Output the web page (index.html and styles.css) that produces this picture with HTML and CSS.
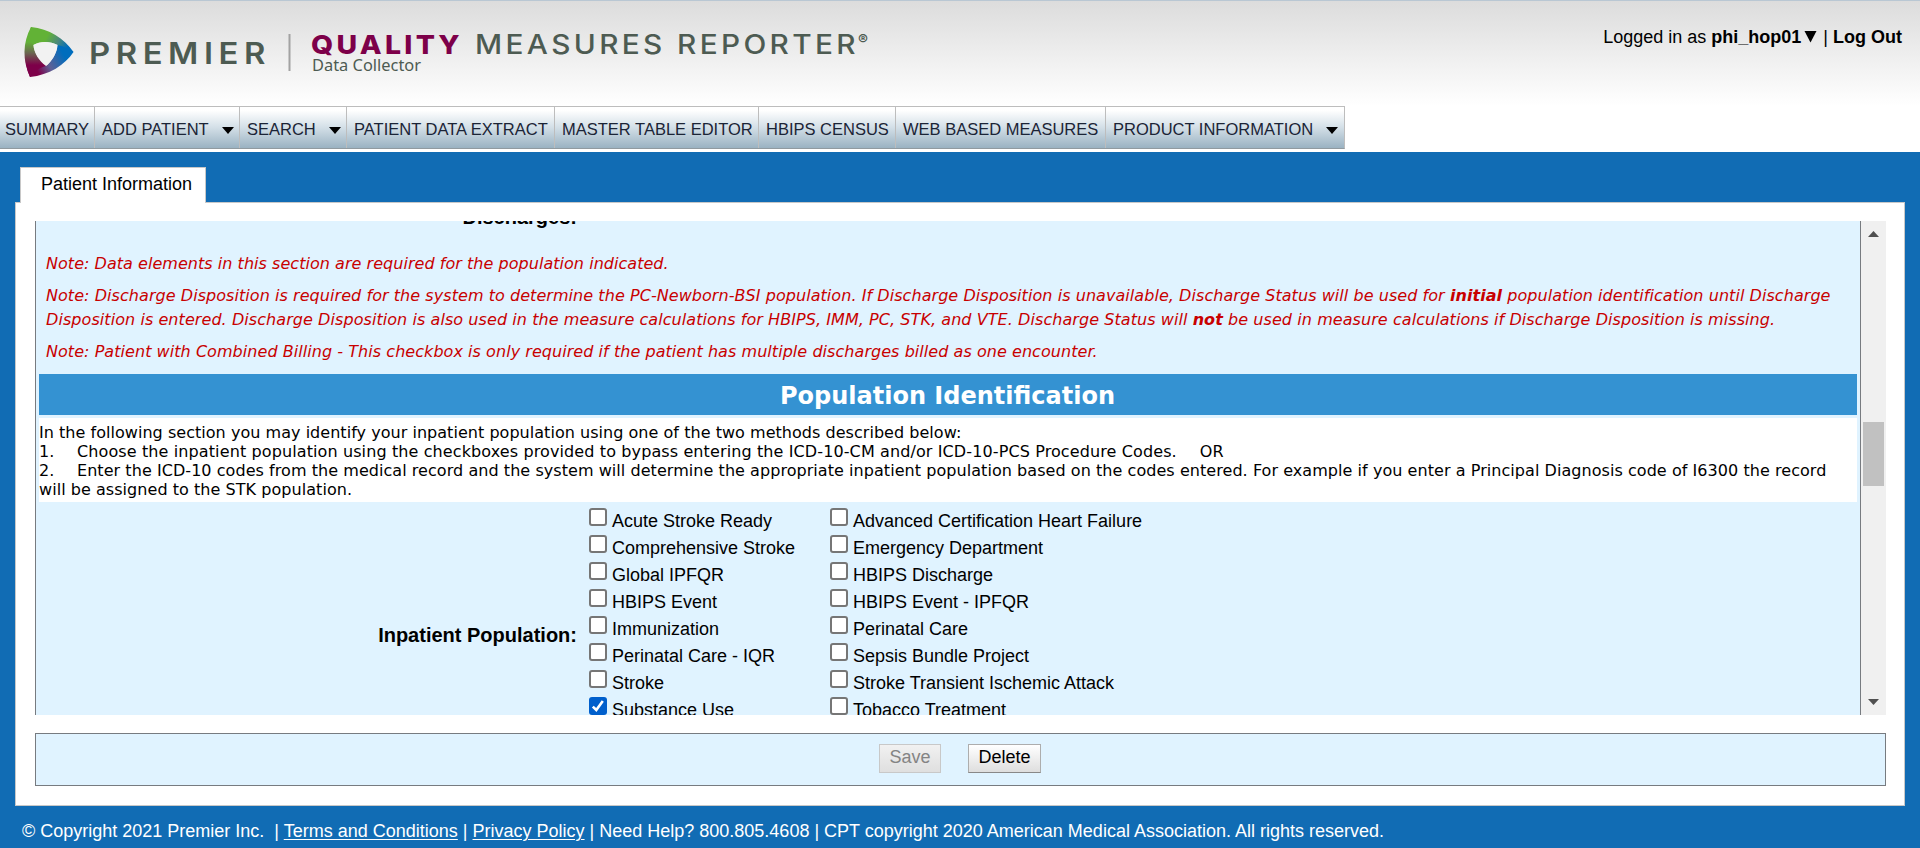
FILE: index.html
```html
<!DOCTYPE html>
<html lang="en">
<head>
<meta charset="utf-8">
<title>Quality Measures Reporter</title>
<link rel="stylesheet" href="styles.css">
</head>
<body>
<header class="header">
  <div class="masthead">
    <svg class="logo" width="880" height="100" viewBox="0 0 880 100" role="img" aria-label="Premier Quality Measures Reporter">
      <defs>
        <linearGradient id="left" x1="0" y1="27" x2="0" y2="77" gradientUnits="userSpaceOnUse"><stop offset=".3" stop-color="#62b236"/><stop offset=".52" stop-color="#6b6650"/><stop offset=".76" stop-color="#7d0049"/></linearGradient>
        <linearGradient id="top" x1="32" y1="30" x2="73" y2="52" gradientUnits="userSpaceOnUse"><stop offset=".35" stop-color="#62b236"/><stop offset=".6" stop-color="#4d8a79"/><stop offset=".85" stop-color="#006dbd"/></linearGradient>
        <linearGradient id="base" x1="32" y1="76" x2="73" y2="52" gradientUnits="userSpaceOnUse"><stop offset=".15" stop-color="#7d0049"/><stop offset=".42" stop-color="#5e6096"/><stop offset=".8" stop-color="#006dbd"/></linearGradient>
      </defs>
      <path d="M31 27C22.500 43 22.500 60 30 77L47 66C39 60 34 53 33.500 45L38 32Z" fill="url(#left)"/>
      <path d="M31 27C49 29 64 38 73.500 52L57 54L57.500 45C50 41 40 41 33.500 45C29 39 29 33 31 27Z" fill="url(#top)"/>
      <path d="M73.500 52C65 65 49 75 30 77L34 60C38 63 42 65 46 66C52 61 57 53 57.500 45C63 46 69 49 73.500 52Z" fill="url(#base)"/>
      <path d="M30 77C27 70 25.500 63 25 56L34 50C36 57 40 62 46 66C39 68 34 72 30 77Z" fill="url(#left)"/>
      <path d="M33.500 45C40 41 50 41 57.500 45C57 53 52 61 46 66C39 61 34 53 33.500 45Z" fill="#f2f2f2"/>
      <text class="logo-name" x="89" y="64" textLength="182" lengthAdjust="spacingAndGlyphs">PREMIER</text>
      <rect x="288.500" y="34" width="2" height="37" fill="#a2a2a2"/>
      <text class="logo-quality" x="311" y="53.500" textLength="152" lengthAdjust="spacingAndGlyphs">QUALITY</text>
      <text class="logo-measures" x="475" y="53.500" textLength="384" lengthAdjust="spacingAndGlyphs">MEASURES REPORTER</text>
      <text class="logo-mark" x="858" y="45">®</text>
      <text class="logo-sub" x="312" y="71" textLength="109" lengthAdjust="spacingAndGlyphs">Data Collector</text>
    </svg>
    <div class="account">Logged in as <b>phi_hop01<svg class="tri" width="13" height="13" viewBox="0 0 13 13"><path d="M.5 1H12.500L6.500 12.500Z"/></svg></b> | <b>Log Out</b></div>
  </div>
  <nav class="nav">
    <a class="nav-summary">SUMMARY</a>
    <a class="nav-add">ADD PATIENT<i class="caret"></i></a>
    <a class="nav-search">SEARCH<i class="caret"></i></a>
    <a class="nav-extract">PATIENT DATA EXTRACT</a>
    <a class="nav-master">MASTER TABLE EDITOR</a>
    <a class="nav-census">HBIPS CENSUS</a>
    <a class="nav-web">WEB BASED MEASURES</a>
    <a class="nav-product">PRODUCT INFORMATION<i class="caret"></i></a>
  </nav>
</header>
<main class="main">
  <div class="tab">Patient Information</div>
  <section class="panel">
    <div class="viewport">
      <div class="content">
        <div class="field-label discharges">Discharges:</div>
        <div class="notes">
          <p class="n1">Note: Data elements in this section are required for the population indicated.</p>
          <p><span class="n2">Note: Discharge Disposition is required for the system to determine the PC-Newborn-BSI population. If Discharge Disposition is unavailable, Discharge Status will be used for <b>initial</b> population identification until Discharge</span><br><span class="n3">Disposition is entered. Discharge Disposition is also used in the measure calculations for HBIPS, IMM, PC, STK, and VTE. Discharge Status will <b>not</b> be used in measure calculations if Discharge Disposition is missing.</span></p>
          <p class="n4">Note: Patient with Combined Billing - This checkbox is only required if the patient has multiple discharges billed as one encounter.</p>
        </div>
        <h2 class="title">Population Identification</h2>
        <div class="intro">
          <div class="i1">In the following section you may identify your inpatient population using one of the two methods described below:</div>
          <div class="i2"><span class="num">1.</span>Choose the inpatient population using the checkboxes provided to bypass entering the ICD-10-CM and/or ICD-10-PCS Procedure Codes.<span class="or">OR</span></div>
          <div class="i3"><span class="num">2.</span>Enter the ICD-10 codes from the medical record and the system will determine the appropriate inpatient population based on the codes entered. For example if you enter a Principal Diagnosis code of I6300 the record</div>
          <div class="i4">will be assigned to the STK population.</div>
        </div>
        <div class="population">
          <div class="field-label">Inpatient Population:</div>
          <div class="checks">
            <label><i class="box"></i>Acute Stroke Ready</label><label><i class="box"></i>Advanced Certification Heart Failure</label>
            <label><i class="box"></i>Comprehensive Stroke</label><label><i class="box"></i>Emergency Department</label>
            <label><i class="box"></i>Global IPFQR</label><label><i class="box"></i>HBIPS Discharge</label>
            <label><i class="box"></i>HBIPS Event</label><label><i class="box"></i>HBIPS Event - IPFQR</label>
            <label><i class="box"></i>Immunization</label><label><i class="box"></i>Perinatal Care</label>
            <label><i class="box"></i>Perinatal Care - IQR</label><label><i class="box"></i>Sepsis Bundle Project</label>
            <label><i class="box"></i>Stroke</label><label><i class="box"></i>Stroke Transient Ischemic Attack</label>
            <label><i class="box on"><svg width="18" height="18" viewBox="0 0 18 18"><path d="M3.800 9.600L7.300 13L13.800 4" fill="none" stroke="#fff" stroke-width="2.600"/></svg></i>Substance Use</label><label><i class="box"></i>Tobacco Treatment</label>
          </div>
        </div>
      </div>
      <div class="scrollbar">
        <svg width="11" height="6" viewBox="0 0 11 6"><path d="M0 6H11L5.500 0Z"/></svg>
        <div class="thumb"></div>
        <svg width="11" height="6" viewBox="0 0 11 6"><path d="M0 0H11L5.500 6Z"/></svg>
      </div>
    </div>
    <div class="actions">
      <button class="btn save" disabled>Save</button>
      <button class="btn delete">Delete</button>
    </div>
  </section>
  <footer class="footer">© Copyright 2021 Premier Inc. &nbsp;| <u>Terms and Conditions</u> | <u>Privacy Policy</u> | Need Help? 800.805.4608 | CPT copyright 2020 American Medical Association. All rights reserved.</footer>
</main>
</body>
</html>
```
FILE: styles.css
```css
* { box-sizing: border-box; }
body { margin: 0; height: 848px; overflow: hidden; display: flex; flex-direction: column; font-family: "Liberation Sans", Arial, sans-serif; font-size: 18px; color: #000; background: #116cb4; white-space: nowrap; }
.header { height: 152px; border-top: 1px solid #b9c7d3; background: linear-gradient(#dcdcdc, #fff 105px); }
.masthead { height: 105px; display: flex; justify-content: space-between; }
.logo { margin-top: -1px; }
.logo text { font-family: Inter, sans-serif; fill: #4d5b52; }
.logo .logo-name { font-size: 29.5px; font-weight: 600; letter-spacing: 5px; }
.logo .logo-quality { font-size: 26px; font-weight: 800; fill: #7d0049; letter-spacing: 3px; }
.logo .logo-measures { font-size: 26.5px; font-weight: 500; letter-spacing: 3px; }
.logo .logo-mark { font-size: 15px; font-weight: 700; }
.logo .logo-sub { font-family: "Noto Sans", sans-serif; font-size: 15.5px; }
.account { padding: 26px 18px 0 0; line-height: 21px; }
.tri { margin: 0 1px 0 3px; }
.nav { display: flex; width: 1345px; height: 43px; border-top: 1px solid #bdbdbd; border-right: 1px solid #bdbdbd; border-bottom: 1px solid #909aa0; background: linear-gradient(#fff 8%, #d3dfe7 50%, #9ab2c2); font-size: 16.5px; line-height: 45px; color: #1b2436; }
.nav a { display: flex; justify-content: space-between; padding-left: 7px; border-left: 1px solid #bdbdbd; }
.nav .nav-summary { width: 94px; padding-left: 5px; border-left: 0; }
.nav-add { width: 145px; }
.nav-search { width: 107px; }
.nav-extract { width: 208px; }
.nav-master { width: 204px; }
.nav-census { width: 137px; }
.nav-web { width: 210px; }
.nav-product { width: 239px; }
.caret { width: 0; height: 0; margin: 20px 5px 0 0; border: 6px solid transparent; border-top: 7px solid #000; border-bottom: 0; }
.nav-product .caret { margin-right: 6px; }
.main { flex: 1; padding: 15px 15px 0; display: flex; flex-direction: column; }
.tab { width: 186px; height: 36px; margin: 0 0 -1px 5px; padding-left: 20px; line-height: 33px; background: #fff; border: 1px solid #c8c8c8; border-bottom: 0; z-index: 1; }
.panel { height: 604px; padding: 18px 18px 0 19px; background: #fff; border: 1px solid #c8c8c8; display: flex; flex-direction: column; gap: 18px; }
.viewport { height: 494px; display: flex; overflow: hidden; }
.content { width: 1826px; padding: 0 3px; background: #e0f3ff; border: solid #777b80; border-width: 0 1px; }
.field-label { width: 538px; text-align: right; font-weight: bold; font-size: 20px; }
.discharges { height: 27px; margin-top: -16px; line-height: 25px; }
.notes { height: 141px; padding: 20px 7px 0; color: #c80000; font-family: "DejaVu Sans", Verdana, sans-serif; font-size: 16px; font-style: italic; line-height: 24px; }
.notes p { margin: 0 0 8px; }
.n1 { letter-spacing: .039px; }
.n2 { letter-spacing: .058px; }
.n3 { letter-spacing: .068px; }
.n4 { letter-spacing: .052px; }
.title { height: 41px; margin: 1px 0 3px; padding-right: 1px; color: #fff; background: #3492d2; text-align: center; font: bold 24px/44px "DejaVu Sans", Verdana, sans-serif; }
.intro { height: 84px; padding-top: 5px; background: #fff; font-family: "DejaVu Sans", Verdana, sans-serif; font-size: 16px; line-height: 19px; }
.i1 { letter-spacing: .036px; }
.i2 { letter-spacing: .112px; }
.i3 { letter-spacing: .055px; }
.i4 { letter-spacing: .05px; }
.num { display: inline-block; width: 38px; }
.or { margin-left: 23px; }
.population { display: flex; align-items: flex-start; padding-top: 3px; }
.population .field-label { padding-top: 118px; line-height: 25px; }
.checks { margin-left: 12px; display: grid; grid-template-columns: 241px 330px; grid-auto-rows: 27px; }
.checks label { display: flex; gap: 5px; line-height: 32px; }
.box { flex: none; width: 18px; height: 18px; margin-top: 3px; border: 2px solid #767676; border-radius: 3px; background: #fff; }
.box.on { border: 0; background: #005fcc; }
.box svg { display: block; }
.scrollbar { width: 25px; background: #f0f0f0; display: flex; flex-direction: column; align-items: center; justify-content: space-between; padding: 10px 0; fill: #505050; }
.thumb { width: 21px; height: 64px; margin-bottom: 28px; background: #c1c1c1; }
.actions { height: 53px; background: #e0f3ff; border: 1px solid #777b80; display: flex; justify-content: center; gap: 27px; padding: 10px 1px 0 0; }
.btn { height: 29px; padding: 0 0 2px; border: 1px solid #adadad; border-bottom-color: #888; background: linear-gradient(#fff, #dedede); font: 18px/25px "Liberation Sans", Arial, sans-serif; color: #000; }
.save { width: 62px; }
.delete { width: 73px; }
.save:disabled { color: #848484; background: linear-gradient(#f1f1f1, #dfdfdf); border-color: #c8c8c8; }
.footer { padding: 15px 0 0 7px; color: #fff; line-height: 21px; }
.footer u { text-underline-offset: 2px; text-decoration-thickness: 1px; }
```
